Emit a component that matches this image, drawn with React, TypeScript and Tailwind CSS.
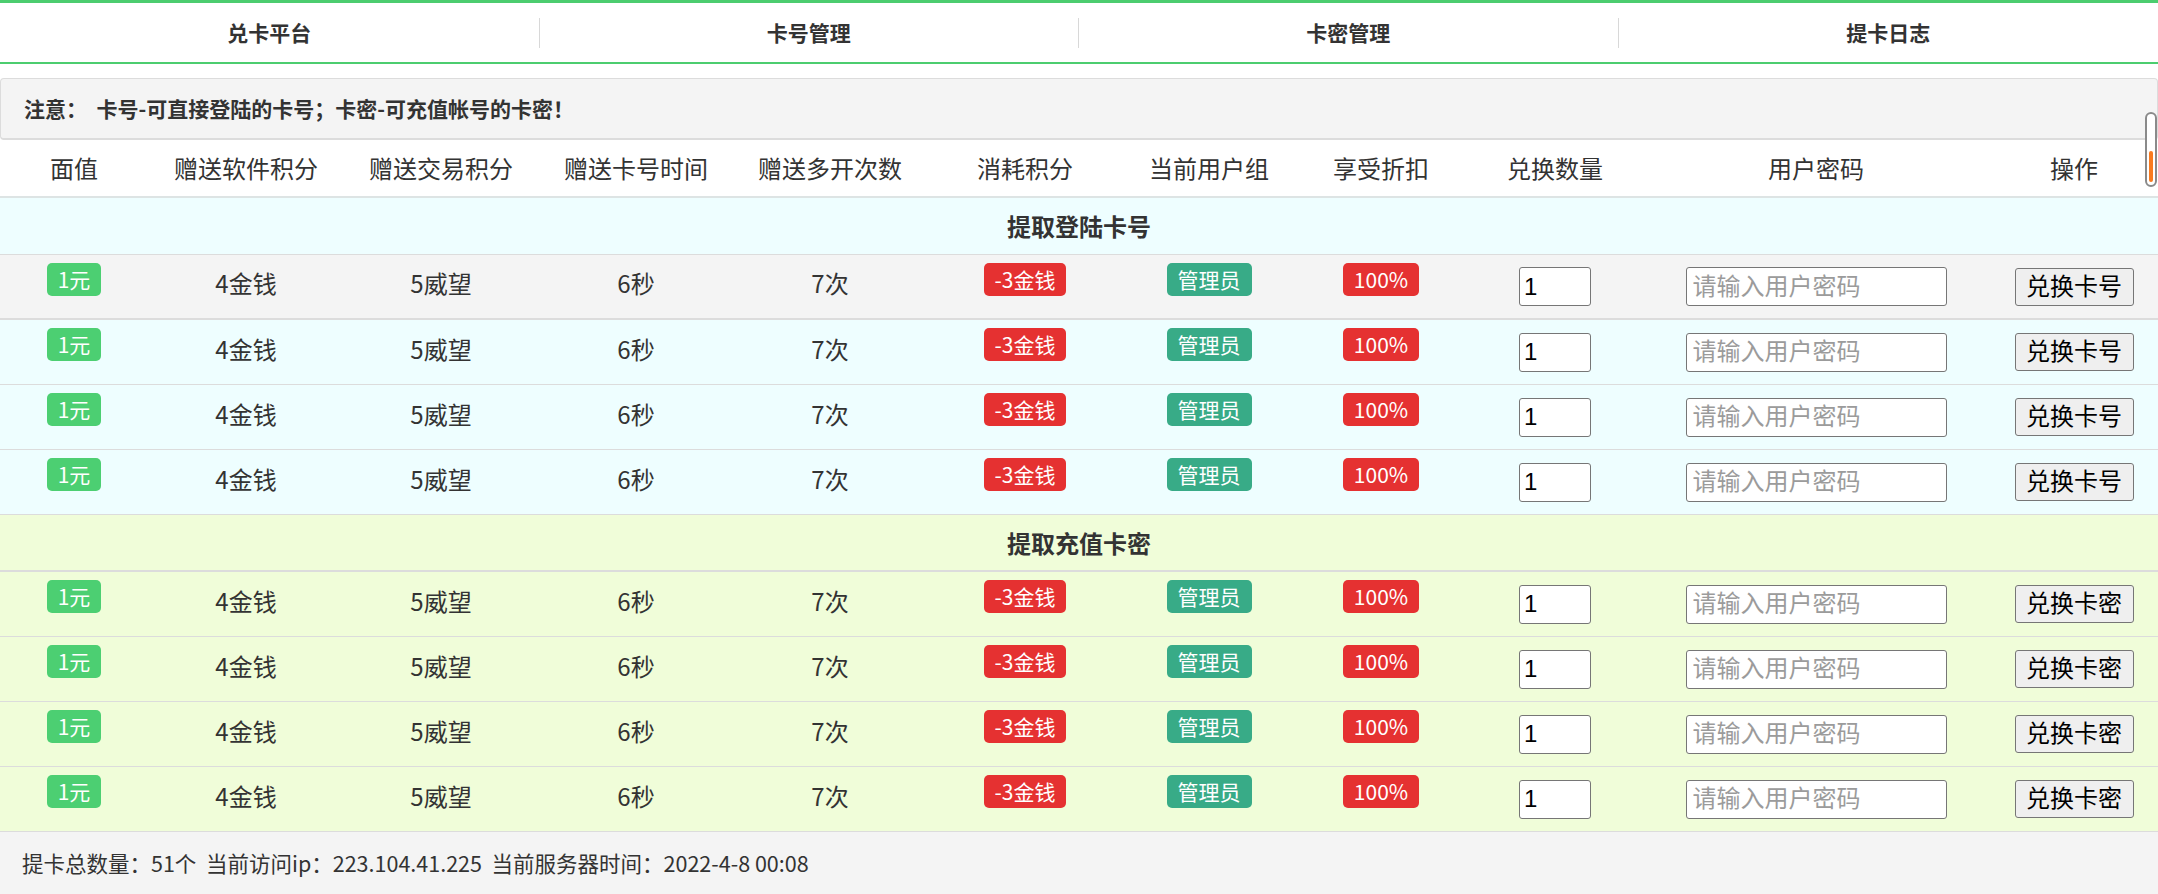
import React from "react";

const cols =
  "grid grid-cols-[148px_196px_194px_196px_192px_198px_170px_174px_174px_348px_168px] items-center";

const headers = [
  "面值",
  "赠送软件积分",
  "赠送交易积分",
  "赠送卡号时间",
  "赠送多开次数",
  "消耗积分",
  "当前用户组",
  "享受折扣",
  "兑换数量",
  "用户密码",
  "操作",
];

const badge =
  "inline-block rounded-[5px] px-[11px] py-[3px] text-[21px] leading-[27px] text-white mb-[18px]";

function DataRow({ bg, label, border }: { bg: string; label: string; border: string }) {
  return (
    <div className={`${cols} h-[65px] ${bg} ${border} text-[24px] text-[#333] text-center`}>
      <div>
        <span className={`${badge} bg-[#4ccf72]`}>1元</span>
      </div>
      <div className="pb-[7px]">4金钱</div>
      <div className="pb-[7px]">5威望</div>
      <div className="pb-[7px]">6秒</div>
      <div className="pb-[7px]">7次</div>
      <div>
        <span className={`${badge} bg-[#e53131]`}>-3金钱</span>
      </div>
      <div>
        <span className={`${badge} bg-[#38ab87]`}>管理员</span>
      </div>
      <div>
        <span className={`${badge} bg-[#e53131]`}>100%</span>
      </div>
      <div className="flex justify-center">
        <input
          defaultValue="1"
          className="w-[72px] h-[39px] rounded-[3px] border border-[#767676] bg-white px-[4px] text-[24px] text-black outline-none font-['Liberation_Sans','Noto_Sans_CJK_SC',sans-serif]"
        />
      </div>
      <div className="flex justify-center">
        <input
          placeholder="请输入用户密码"
          className="w-[261px] h-[39px] rounded-[3px] border border-[#767676] bg-white px-[6px] text-[24px] text-black placeholder:text-[#9b9b9b] outline-none font-['Liberation_Sans','Noto_Sans_CJK_SC',sans-serif]"
        />
      </div>
      <div className="flex justify-center">
        <button className="w-[119px] h-[38px] rounded-[3px] border border-[#767676] bg-[#efefef] text-[24px] leading-none text-black font-['Liberation_Sans','Noto_Sans_CJK_SC',sans-serif]">
          {label}
        </button>
      </div>
    </div>
  );
}

export default function App() {
  return (
    <div className="relative w-[2158px] h-[894px] overflow-hidden bg-white font-['Noto_Sans_CJK_SC','Noto_Sans',sans-serif] text-[#333]">
      {/* nav */}
      <div className="grid grid-cols-4 h-[64px] border-t-[3px] border-b-2 border-[#4ccd6f]">
        {["兑卡平台", "卡号管理", "卡密管理", "提卡日志"].map((t, i) => (
          <div key={t} className="flex items-center">
            <div className="flex-1 text-center text-[21px] font-bold text-[#333]">{t}</div>
            {i < 3 && <div className="w-px h-[30px] bg-[#d8d8d8]" />}
          </div>
        ))}
      </div>

      {/* notice */}
      <div className="mt-[14px] h-[62px] rounded-[4px] border border-[#dcdcdc] border-b-2 bg-[#f4f4f4] flex items-center pl-[23px] text-[21px] font-bold text-[#333]">
        注意：&nbsp; 卡号-可直接登陆的卡号；卡密-可充值帐号的卡密！
      </div>

      {/* header */}
      <div className={`${cols} h-[58px] border-b-2 border-[#dde4e4] bg-white text-[24px] text-[#333] text-center`}>
        {headers.map((h) => (
          <div key={h}>{h}</div>
        ))}
      </div>

      {/* section 1 */}
      <div className="h-[57px] flex items-center justify-center bg-[#eefeff] border-b border-[#dcdcdc] text-[24px] font-bold text-[#333]">
        提取登陆卡号
      </div>
      <DataRow bg="bg-[#f4f4f4]" label="兑换卡号" border="border-b-2 border-[#dcdcdc]" />
      <DataRow bg="bg-[#eefeff]" label="兑换卡号" border="border-b border-[#dcdcdc]" />
      <DataRow bg="bg-[#eefeff]" label="兑换卡号" border="border-b border-[#dcdcdc]" />
      <DataRow bg="bg-[#eefeff]" label="兑换卡号" border="border-b border-[#dcdcdc]" />

      {/* section 2 */}
      <div className="h-[57px] flex items-center justify-center bg-[#f0fdd9] border-b-2 border-[#dcdcdc] text-[24px] font-bold text-[#333]">
        提取充值卡密
      </div>
      <DataRow bg="bg-[#f0fdd9]" label="兑换卡密" border="border-b border-[#dcdcdc]" />
      <DataRow bg="bg-[#f0fdd9]" label="兑换卡密" border="border-b border-[#dcdcdc]" />
      <DataRow bg="bg-[#f0fdd9]" label="兑换卡密" border="border-b border-[#dcdcdc]" />
      <DataRow bg="bg-[#f0fdd9]" label="兑换卡密" border="border-b border-[#dcdcdc]" />

      {/* footer */}
      <div className="h-[62px] bg-[#f4f4f4] flex items-center pl-[22px] text-[21.5px] text-[#333]">
        提卡总数量：51个&nbsp; 当前访问ip：223.104.41.225&nbsp; 当前服务器时间：2022-4-8 00:08
      </div>

      {/* overlay scrollbar */}
      <div className="absolute right-[1px] top-[112px] w-[12px] h-[75px] rounded-full border-2 border-[#8a8a8a] bg-white">
        <div className="absolute left-[2px] bottom-[3px] w-[4px] h-[31px] rounded-full bg-[#f97a1f]" />
      </div>
    </div>
  );
}
